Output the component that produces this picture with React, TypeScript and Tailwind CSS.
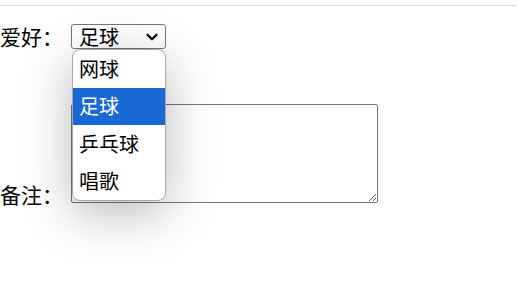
import { ChevronDown } from 'lucide-react';

const options = ['网球', '足球', '乒乓球', '唱歌'];

export default function App() {
  const selected = '足球';

  return (
    <div className="w-[517px] h-[302px] bg-white overflow-hidden text-black text-[20px] font-['Noto_Sans_CJK_SC','Microsoft_YaHei',sans-serif]">
      <div className="pt-[5px] pr-px">
        <div className="border-t border-[#dcdcdc]" />
      </div>

      {/* Hobby */}
      <div className="mt-[18px] flex items-center h-[25px]">
        <span className="leading-none text-[21px]">爱好：</span>
        <div className="relative ml-[8px]">
          <div className="w-[95px] h-[25px] border border-[#767676] rounded-[3px] flex items-center justify-between pl-[7px] pr-[4px]">
            <span className="leading-none">{selected}</span>
            <ChevronDown className="w-[18px] h-[18px]" strokeWidth={3} />
          </div>
          <ul className="absolute z-10 left-px top-[25px] w-[94px] bg-white border border-[#a8a8a8] rounded-[8px] overflow-hidden shadow-[0_12px_50px_rgba(0,0,0,0.28)]">
            {options.map((o) => (
              <li
                key={o}
                className={`h-[37.5px] flex items-center pl-[6px] leading-none ${
                  o === selected ? 'bg-[#1a68d4] text-white' : ''
                }`}
              >
                {o}
              </li>
            ))}
          </ul>
        </div>
      </div>

      {/* Remarks */}
      <div className="mt-[55px] leading-[26px]">
        <span className="text-[21px]">备注：</span>
        <textarea className="ml-[8px] w-[307px] h-[99px] border border-[#767676] rounded-[2px] align-baseline" />
      </div>
    </div>
  );
}
